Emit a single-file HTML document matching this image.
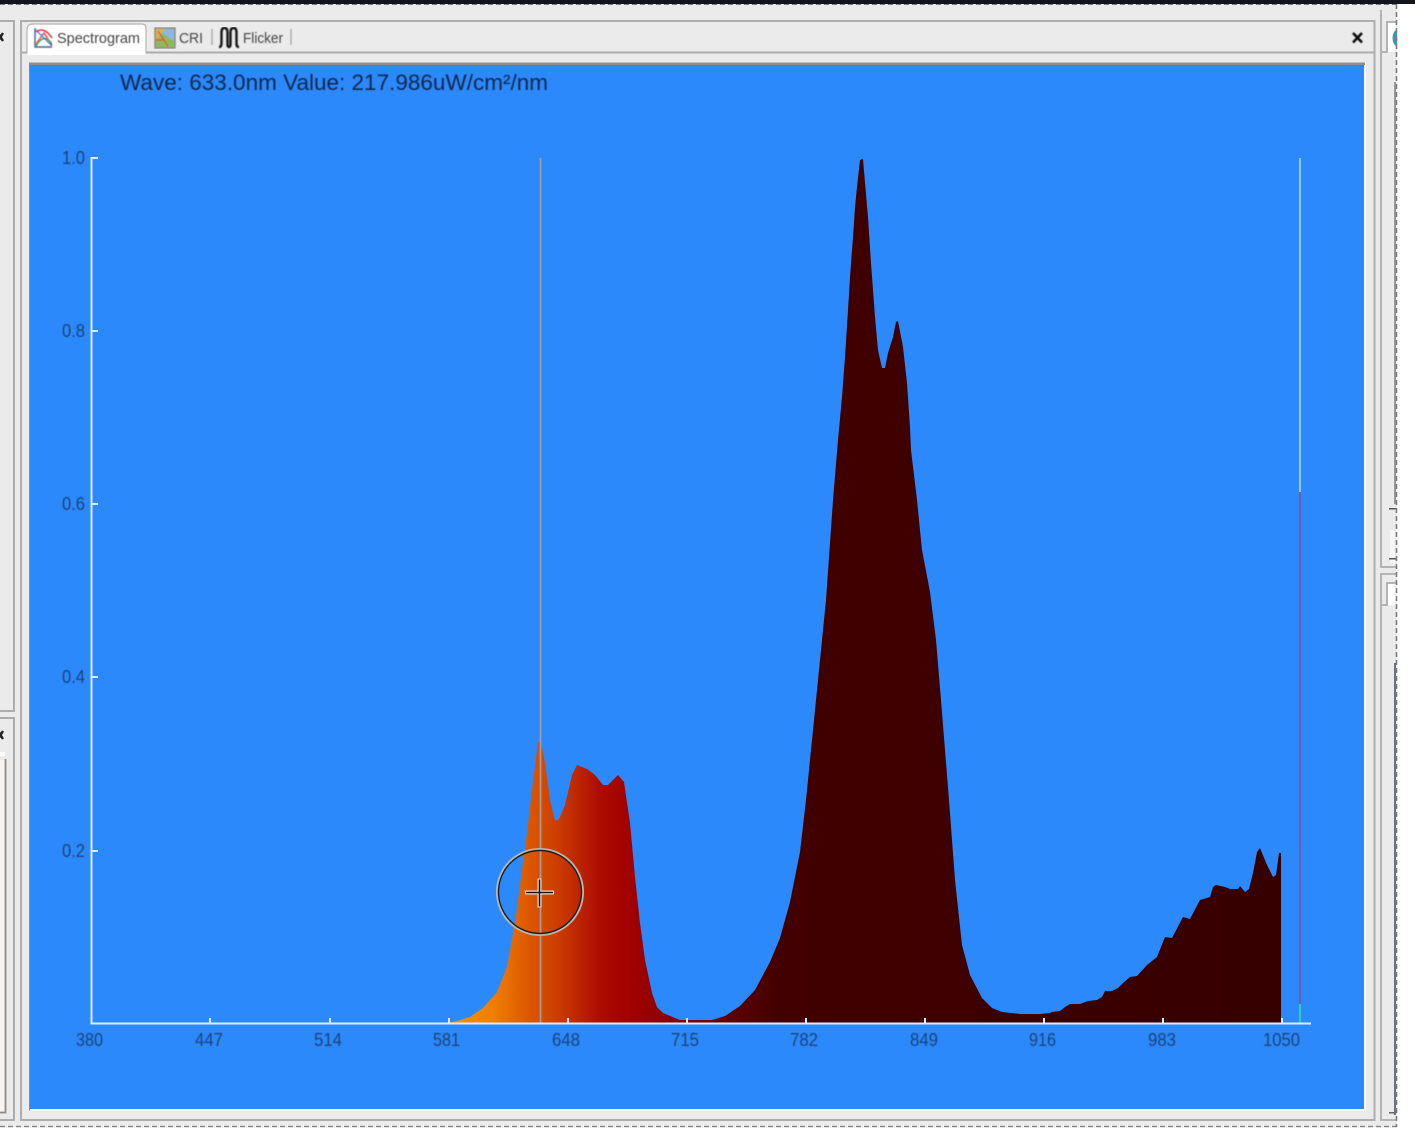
<!DOCTYPE html>
<html><head><meta charset="utf-8"><style>
html,body{margin:0;padding:0;width:1415px;height:1129px;overflow:hidden;background:#fff}
svg{display:block}
text{font-family:"Liberation Sans",sans-serif}
</style></head><body>
<svg width="1415" height="1129" viewBox="0 0 1415 1129" xmlns="http://www.w3.org/2000/svg">
<defs>
<linearGradient id="sp" gradientUnits="userSpaceOnUse" x1="450" y1="0" x2="1281" y2="0">
<stop offset="0" stop-color="#f49000"/>
<stop offset="0.05" stop-color="#f08000"/>
<stop offset="0.09" stop-color="#de5c00"/>
<stop offset="0.13" stop-color="#cc3c00"/>
<stop offset="0.18" stop-color="#ad0c00"/>
<stop offset="0.22" stop-color="#a00000"/>
<stop offset="0.26" stop-color="#8c0000"/>
<stop offset="0.33" stop-color="#600000"/>
<stop offset="0.40" stop-color="#420000"/>
<stop offset="1" stop-color="#360000"/>
</linearGradient>
<filter id="b" x="-5%" y="-5%" width="110%" height="110%"><feGaussianBlur stdDeviation="0.45"/></filter>
</defs>
<!-- window background -->
<rect x="0" y="0" width="1397" height="1127" fill="#ebebeb"/>
<rect x="0" y="0" width="1415" height="4" fill="#14141f"/>
<line x1="0" y1="4.5" x2="1397" y2="4.5" stroke="#777" stroke-width="1" stroke-dasharray="5 3"/>
<line x1="0" y1="1126.5" x2="1397" y2="1126.5" stroke="#888" stroke-width="1.5" stroke-dasharray="5 3"/>

<!-- left panels -->
<g fill="none" stroke="#adadad" stroke-width="2">
<path d="M0 21H14V711H0"/>
<path d="M0 718H14V1120H0"/>
</g>
<rect x="0" y="752" width="5" height="4" fill="#fff"/>
<rect x="0" y="760" width="5" height="352" fill="#f7f3f0"/>
<path d="M5.500 759V1112.500H0" fill="none" stroke="#8a8a8a" stroke-width="1.800"/>
<path d="M-2 33L3 41M3 33L-2 41" stroke="#222" stroke-width="2.400" fill="none"/>
<path d="M-2 731L3 739M3 731L-2 739" stroke="#222" stroke-width="2.400" fill="none"/>

<!-- main frame -->
<g fill="none" stroke="#adadad" stroke-width="2">
<rect x="21" y="21" width="1353.500" height="1099"/>
<line x1="21" y1="52.500" x2="1374" y2="52.500"/>
</g>

<!-- right panels -->
<g fill="none" stroke="#adadad" stroke-width="1.800">
<path d="M1381 10V567H1397"/>
<path d="M1397 574H1381V1120H1396"/>
<path d="M1397 22H1387V52H1382"/>
<path d="M1397 583H1387V605H1381"/>
</g>
<rect x="1388" y="23" width="8" height="29" fill="#fff"/>
<rect x="1388" y="584" width="8" height="21" fill="#fff"/>
<rect x="1390" y="530" width="5" height="33" fill="#f6f6f6"/>
<ellipse cx="1397" cy="38" rx="4.500" ry="8" fill="#3f9aa8"/>
<rect x="1394" y="82" width="2" height="422" fill="#9a9a9a"/>
<rect x="1394" y="663" width="2" height="452" fill="#6c7380"/>
<rect x="1389" y="508" width="7" height="1.500" fill="#555"/>
<rect x="1389" y="558" width="7" height="1.500" fill="#555"/>
<rect x="1389" y="1112" width="7" height="1.500" fill="#666"/>
<rect x="1397" y="5" width="18" height="1124" fill="#fff"/>
<line x1="1396.500" y1="4" x2="1396.500" y2="1127" stroke="#777" stroke-width="1.500" stroke-dasharray="5 3"/>

<!-- tabs -->
<path d="M27 53V30Q27 24 33 24H142Q146 24 146 28V53Z" fill="#fff" stroke="#b4b4b4" stroke-width="1.200"/>
<rect x="27.600" y="52" width="118" height="3" fill="#fff"/>
<g filter="url(#b)">
<path d="M35 28V47H52" fill="none" stroke="#44608c" stroke-width="1.400"/>
<path d="M36 44L44 33L52 45" fill="none" stroke="#e04a4a" stroke-width="1.400"/>
<path d="M36 32Q44 26 52 38" fill="none" stroke="#d83c3c" stroke-width="1.600"/>
<path d="M36 46Q44 32 52 44" fill="none" stroke="#3ca04a" stroke-width="1.400"/>
<path d="M36 30L52 46" fill="none" stroke="#3a6cd0" stroke-width="1.200"/>
<text x="57" y="43" font-size="14.500" fill="#444" textLength="83" lengthAdjust="spacingAndGlyphs">Spectrogram</text>

<rect x="155" y="28" width="20" height="20" fill="#8fb85c" stroke="#8a8a8a" stroke-width="1.400"/>
<path d="M156 29H174V41Z" fill="#8ab8e0"/>
<path d="M156 29L165 29L156 40Z" fill="#e0b050"/>
<path d="M158 31L168 46M168 46L164 40L156 40" fill="none" stroke="#d8602c" stroke-width="1.400"/>
<text x="179" y="43" font-size="14.500" fill="#444" textLength="24" lengthAdjust="spacingAndGlyphs">CRI</text>
<line x1="212" y1="29" x2="212" y2="45" stroke="#a8a8a8" stroke-width="1.400"/>
<path d="M219 47Q221.500 47 221.500 43V32Q221.500 28 224.500 28Q227.500 28 227.500 32V44Q227.500 47 229 47Q230.500 47 230.500 44V32Q230.500 28 233.500 28Q236.500 28 236.500 32V44Q236.500 47 239 47" fill="none" stroke="#151515" stroke-width="2.400"/>
<text x="243" y="43" font-size="14.500" fill="#444" textLength="40" lengthAdjust="spacingAndGlyphs">Flicker</text>
<line x1="291" y1="29" x2="291" y2="45" stroke="#a8a8a8" stroke-width="1.400"/>
<path d="M1353 33L1362 42.500M1362 33L1353 42.500" stroke="#111" stroke-width="2.600" fill="none"/>
</g>

<!-- plot area -->
<rect x="29" y="62.500" width="1336" height="2.500" fill="#8f8f8f"/>
<rect x="29" y="62.500" width="1.500" height="1048" fill="#8a8a8a"/>
<rect x="30" y="65" width="1334" height="1044" fill="#2c89fb"/>
<rect x="1364" y="65" width="2" height="1046" fill="#fafafa"/>
<rect x="30" y="1109" width="1336" height="2" fill="#fafafa"/>

<text x="120" y="90" font-size="22" fill="#10284c" textLength="428" lengthAdjust="spacingAndGlyphs" filter="url(#b)">Wave: 633.0nm Value: 217.986uW/cm²/nm</text>

<!-- spectrum -->
<path fill="url(#sp)" d="M440 1023L453 1022L470 1017L483 1008L497 992L507 967L515 923L522 870L527 833L532 790L538 742L541 742L545 763L550 800L555 821L559 819L565 805L572 775L577 765L587 769L595 775L603 785L608 785L618 775L624 782L630 823L635 877L640 923L645 960L652 993L657 1007L663 1013L680 1020L690 1020L712 1020L725 1016L740 1006L755 990L770 962L780 938L790 902L800 852L806 800L816 700L826 600L833 500L838 440L842 397L845 357L848 310L850 277L853 237L855 207L857 187L860 160L863 159L865 183L868 217L871 263L875 317L878 350L882 368L885 368L888 353L893 337L896 322L898 321L903 347L907 383L910 427L911 450L917 500L922 550L930 592L936 640L941 700L949 800L955 880L962 945L970 975L982 998L992 1008L1002 1012L1020 1014L1040 1014L1050 1013L1052 1012L1060 1011L1065 1007L1070 1004L1080 1004L1088 1001L1097 1000L1102 997L1105 991L1112 991L1118 988L1123 983L1130 977L1137 976L1147 965L1157 957L1161 947L1165 937L1172 938L1183 917L1190 919L1200 900L1210 897L1213 887L1216 885L1225 887L1230 889L1238 889L1240 886L1245 892L1249 889L1253 873L1257 852L1260 848L1267 865L1273 877L1276 875L1279 853L1281 853L1281 1023Z"/>

<!-- cursor lines -->
<line x1="540.500" y1="158" x2="540.500" y2="1024" stroke="#a39a9e" stroke-width="1.800"/>
<line x1="1300" y1="158" x2="1300" y2="492" stroke="#9fd0fb" stroke-width="1.800"/>
<line x1="1300" y1="492" x2="1300" y2="1004" stroke="#7d559f" stroke-width="1.800"/>
<line x1="1300" y1="1004" x2="1300" y2="1024" stroke="#27cdb8" stroke-width="2.200"/>

<!-- axes -->
<g stroke="#d6ecff" stroke-width="2" fill="none">
<path d="M91.500 157V1023.500H1311"/>
<path d="M91 158H98M91 331H98M91 504H98M91 677H98M91 851H98"/>
<path d="M210 1018V1023M330 1018V1023M449 1018V1023M568 1018V1023M687 1018V1023M806 1018V1023M925 1018V1023M1044 1018V1023M1163 1018V1023M1282 1018V1023"/>
</g>

<!-- target circle -->
<g fill="none">
<circle cx="540" cy="892" r="42.500" stroke="#bdb6b2" stroke-width="3"/>
<circle cx="540" cy="892" r="41.500" stroke="#1c1c1c" stroke-width="1.400"/>
<path d="M525 892.500H554M539.500 878.500V907.500" stroke="#e6dcd6" stroke-width="4"/>
<path d="M526 892.500H553M539.500 879.500V906.500" stroke="#151515" stroke-width="1.500"/>
</g>

<!-- labels -->
<g font-size="18" fill="#1a4278" filter="url(#b)">
<text x="62" y="164" textLength="23" lengthAdjust="spacingAndGlyphs">1.0</text>
<text x="62" y="337" textLength="23" lengthAdjust="spacingAndGlyphs">0.8</text>
<text x="62" y="510" textLength="23" lengthAdjust="spacingAndGlyphs">0.6</text>
<text x="62" y="683" textLength="23" lengthAdjust="spacingAndGlyphs">0.4</text>
<text x="62" y="857" textLength="23" lengthAdjust="spacingAndGlyphs">0.2</text>
<text x="76" y="1046" textLength="27" lengthAdjust="spacingAndGlyphs">380</text>
<text x="195" y="1046" textLength="28" lengthAdjust="spacingAndGlyphs">447</text>
<text x="314" y="1046" textLength="28" lengthAdjust="spacingAndGlyphs">514</text>
<text x="433" y="1046" textLength="27" lengthAdjust="spacingAndGlyphs">581</text>
<text x="552" y="1046" textLength="28" lengthAdjust="spacingAndGlyphs">648</text>
<text x="671" y="1046" textLength="28" lengthAdjust="spacingAndGlyphs">715</text>
<text x="790" y="1046" textLength="28" lengthAdjust="spacingAndGlyphs">782</text>
<text x="910" y="1046" textLength="28" lengthAdjust="spacingAndGlyphs">849</text>
<text x="1029" y="1046" textLength="27" lengthAdjust="spacingAndGlyphs">916</text>
<text x="1148" y="1046" textLength="28" lengthAdjust="spacingAndGlyphs">983</text>
<text x="1263" y="1046" textLength="37" lengthAdjust="spacingAndGlyphs">1050</text>
</g>
</svg>
</body></html>
